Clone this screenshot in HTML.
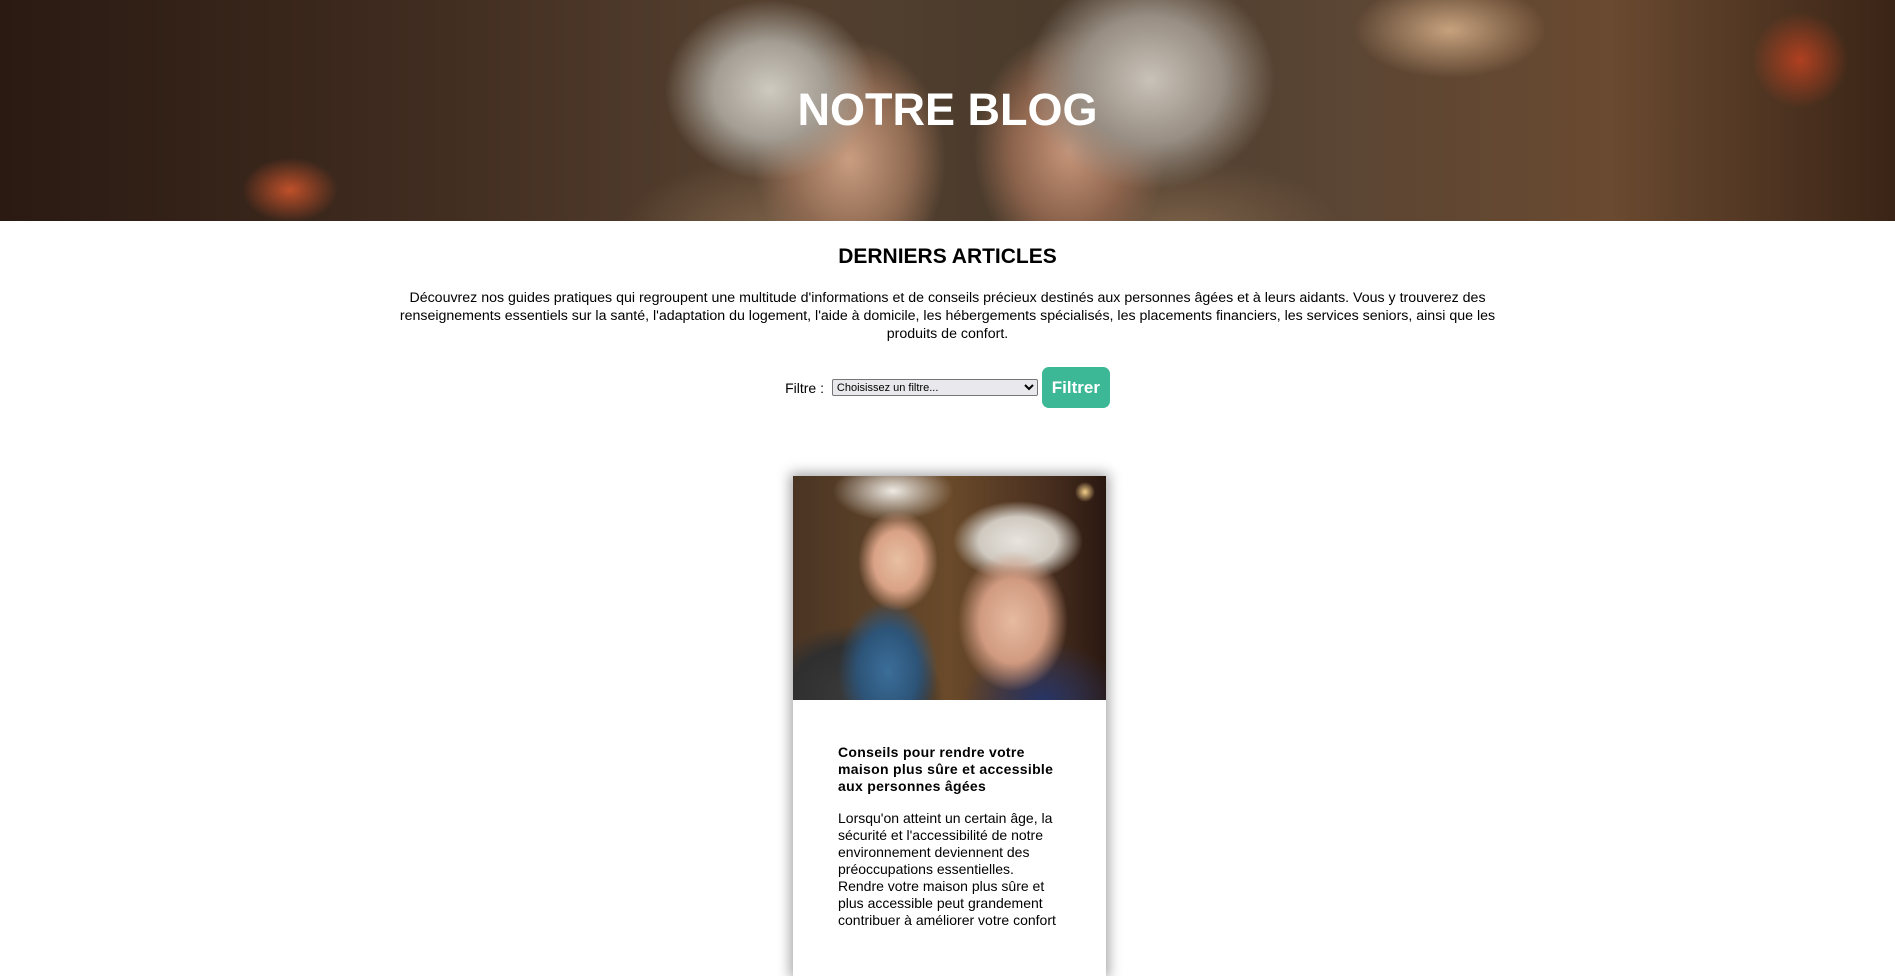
<!DOCTYPE html>
<html><head><meta charset="utf-8"><style>
body{margin:0;font-family:"Liberation Sans",Arial,sans-serif;background:#fff;width:1895px;height:930px;overflow:hidden;color:#000}
.hero{position:relative;height:221px;overflow:hidden;background:
radial-gradient(ellipse 140px 120px at 770px 90px,#cfcac0 0%,#a39d93 40%,transparent 75%),
radial-gradient(ellipse 160px 140px at 1150px 80px,#c9c2b8 0%,#988e83 45%,transparent 78%),
radial-gradient(ellipse 120px 150px at 850px 160px,#c99d80 0%,#8f6a52 50%,transparent 80%),
radial-gradient(ellipse 120px 150px at 1070px 150px,#c8967a 0%,#8a624b 50%,transparent 80%),
radial-gradient(ellipse 200px 90px at 780px 230px,#7a6048 0%,transparent 80%),
radial-gradient(ellipse 200px 90px at 1180px 230px,#7a6048 0%,transparent 80%),
radial-gradient(ellipse 60px 40px at 290px 190px,#c0502a 0%,transparent 80%),
radial-gradient(ellipse 60px 60px at 1800px 60px,#b04020 0%,transparent 80%),
radial-gradient(ellipse 120px 60px at 1450px 30px,#c7a27e 0%,transparent 80%),
linear-gradient(90deg,#2a1a12 0%,#3e2a1e 20%,#55402f 40%,#4a3b2c 55%,#5a4534 70%,#6a4a30 85%,#3a2416 100%)}
.hero h1{position:absolute;left:0;right:0;top:83px;margin:0;text-align:center;color:#fff;font-size:45px;font-weight:bold;line-height:54px}
h2{text-align:center;font-size:21px;margin:23px 0 0;line-height:26px}
p.intro{width:1100px;margin:19px auto 0;text-align:center;font-size:14.2px;line-height:18px}
.filter{text-align:center;margin-top:24px;font-size:14px;height:41px;display:flex;justify-content:center;align-items:center;gap:4px}
select{width:206px;height:17px;font-size:11px;font-family:"Liberation Sans",sans-serif;background:#e9e9ed;border:1px solid #767676;border-radius:2px;padding:0}
button{width:68px;height:41px;background:#3cb896;color:#fff;border:0;border-radius:7px;font-weight:bold;font-size:17px;font-family:"Liberation Sans",sans-serif}
.card{position:absolute;left:793px;top:476px;width:313px;height:500px;background:#fff;box-shadow:0 0 12px 3px rgba(0,0,0,.35)}
.img{height:224px;background:
radial-gradient(ellipse 40px 50px at 105px 85px,#e8c0a2 0%,#d9a286 60%,transparent 100%),
radial-gradient(ellipse 55px 70px at 220px 145px,#e6bba0 0%,#d09a80 60%,transparent 100%),
radial-gradient(ellipse 65px 40px at 225px 65px,#e8e4de 0%,#cfc9c0 60%,transparent 100%),
radial-gradient(ellipse 60px 30px at 100px 15px,#eeeae4 0%,transparent 100%),
radial-gradient(ellipse 50px 70px at 95px 195px,#3b6e9a 0%,#2d5478 60%,transparent 100%),
radial-gradient(ellipse 90px 70px at 60px 220px,#3a3a3a 0%,#2f2f2f 70%,transparent 100%),
radial-gradient(ellipse 80px 60px at 250px 225px,#263466 0%,transparent 100%),
radial-gradient(circle 10px at 292px 16px,#f5d08a 0%,transparent 100%),
linear-gradient(90deg,#4a3524,#6a4a2a 50%,#4a3020 80%,#2a1810)}
.txt{padding:44px 45px 0}
.txt h3{font-size:14px;line-height:17px;margin:0 0 15px;font-weight:bold;letter-spacing:.3px}
.txt p{font-size:14px;line-height:17px;margin:0}
</style></head><body>
<div class="hero"><h1>NOTRE BLOG</h1></div>
<h2>DERNIERS ARTICLES</h2>
<p class="intro">Découvrez nos guides pratiques qui regroupent une multitude d'informations et de conseils précieux destinés aux personnes âgées et à leurs aidants. Vous y trouverez des renseignements essentiels sur la santé, l'adaptation du logement, l'aide à domicile, les hébergements spécialisés, les placements financiers, les services seniors, ainsi que les produits de confort.</p>
<div class="filter">Filtre :&nbsp;<select><option>Choisissez un filtre...</option></select><button>Filtrer</button></div>
<div class="card"><div class="img"></div><div class="txt">
<h3>Conseils pour rendre votre maison plus sûre et accessible aux personnes âgées</h3>
<p>Lorsqu'on atteint un certain âge, la sécurité et l'accessibilité de notre environnement deviennent des préoccupations essentielles. Rendre votre maison plus sûre et plus accessible peut grandement contribuer à améliorer votre confort</p>
</div></div>
</body></html>
